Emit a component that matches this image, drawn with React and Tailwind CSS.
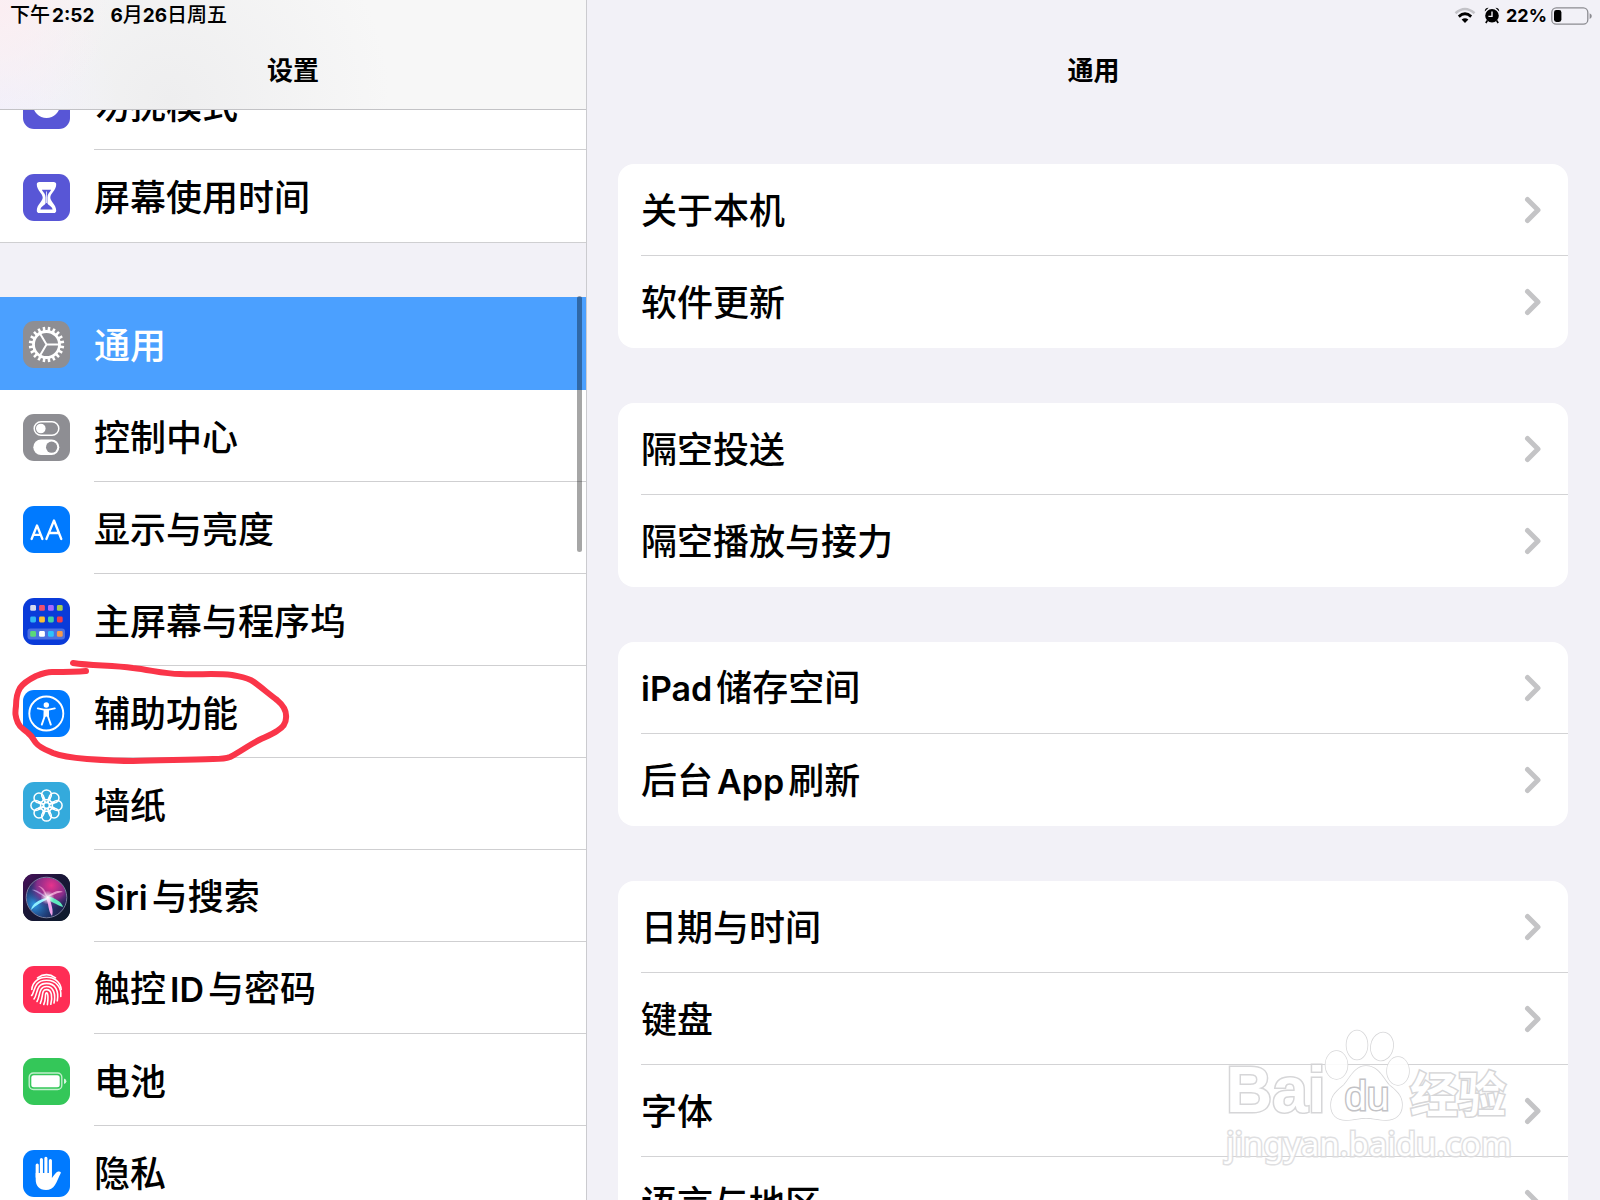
const FONT = "font-['Inter','Noto_Sans_CJK_SC',sans-serif]";

function Gear() {
  const teeth = Array.from({ length: 20 }, (_, i) => i * 18);
  return (
    <g stroke="#fff" fill="none">
      <circle cx="23.5" cy="23.5" r="13" strokeWidth="2.8" />
      {teeth.map((a) => (
        <path key={a} d="M23.5 10.5V5.8" strokeWidth="2.5" transform={`rotate(${a + 9} 23.5 23.5)`} />
      ))}
      <path d="M23.5 23.5H36M23.5 23.5L17 12.5M23.5 23.5L17 34.5" strokeWidth="2" />
    </g>
  );
}

function Switches() {
  return (
    <g>
      <rect x="11.2" y="7.7" width="24.6" height="13.6" rx="6.8" fill="none" stroke="#fff" strokeWidth="1.5" />
      <circle cx="17.8" cy="14.5" r="4.8" fill="#fff" />
      <rect x="10.3" y="25.5" width="26" height="15.5" rx="7.7" fill="#fff" />
      <circle cx="28.6" cy="33.2" r="5.6" fill="#8e8e93" />
    </g>
  );
}

function LetterSizes() {
  return (
    <g fill="none" stroke="#fff" strokeLinecap="round" strokeLinejoin="round" strokeWidth="2.3">
      <path d="M8.6 33L14 19.5L19.4 33M10.4 28.8H17.6" />
      <path d="M23.4 33L31 14.5L38.3 33M26 27H36" />
    </g>
  );
}

const DOTS = [
  ['#d5d9ee', '#f0506e', '#a66bff', '#a5d04e'],
  ['#2fb4f5', '#fcc032', '#3fd0a5', '#f23b4a'],
  ['#5bd778', '#ffffff', '#2cc3fb', '#f79a4b'],
];

function HomeScreen() {
  return (
    <g>
      <rect x="4.5" y="30.5" width="37.5" height="11" rx="3" fill="#4b70e0" />
      {DOTS.map((row, r) =>
        row.map((c, i) => (
          <rect key={c} x={7.2 + i * 8.9} y={[7, 18.6, 33][r]} width="5.8" height="5.8" rx="1.4" fill={c} />
        ))
      )}
    </g>
  );
}

function Person() {
  return (
    <g>
      <circle cx="23.3" cy="23.5" r="17" fill="none" stroke="#fff" strokeWidth="1.9" />
      <circle cx="23.3" cy="15" r="2.7" fill="#fff" />
      <path
        d="M14.8 18.4L20.8 19.6Q23.3 20 25.8 19.6L31.8 18.4M21.6 20.5V26.5L18.8 34.6M25 20.5V26.5L27.8 34.6"
        fill="none"
        stroke="#fff"
        strokeWidth="1.9"
        strokeLinecap="round"
        strokeLinejoin="round"
      />
      <path d="M21 19.6H25.6L26 27.5L23.3 26.6L20.6 27.5Z" fill="#fff" />
    </g>
  );
}

function Flower() {
  const petals = [0, 45, 90, 135, 180, 225, 270, 315];
  return (
    <g fill="none" stroke="#fff" strokeWidth="1.5">
      {petals.map((a) => (
        <circle key={a} cx="23.5" cy="12.8" r="4.9" transform={`rotate(${a} 23.5 23.5)`} />
      ))}
      {petals.map((a) => (
        <path key={a} d="M19.5 15.6Q20.6 19.6 23.5 20.6Q26.400 19.6 27.5 15.6" strokeWidth="1.3" transform={`rotate(${a} 23.5 23.5)`} />
      ))}
      <circle cx="23.5" cy="23.5" r="2.9" />
    </g>
  );
}

function Siri() {
  return (
    <g>
      <defs>
        <linearGradient id="siriBg" x1="0" y1="0" x2="1" y2="1">
          <stop offset="0" stopColor="#4a0f5c" />
          <stop offset="0.4" stopColor="#1b1638" />
          <stop offset="1" stopColor="#0c1c2c" />
        </linearGradient>
        <radialGradient id="siriPink" cx="0.62" cy="0.2" r="0.6">
          <stop offset="0" stopColor="#e8338c" />
          <stop offset="0.6" stopColor="#a02f96" stopOpacity="0.8" />
          <stop offset="1" stopColor="#3b2a80" stopOpacity="0" />
        </radialGradient>
        <radialGradient id="siriBlue" cx="0.2" cy="0.68" r="0.6">
          <stop offset="0" stopColor="#2e9be6" />
          <stop offset="1" stopColor="#1b4c9c" stopOpacity="0" />
        </radialGradient>
        <radialGradient id="siriGlow" cx="0.5" cy="0.5" r="0.5">
          <stop offset="0" stopColor="#fff" />
          <stop offset="1" stopColor="#fff" stopOpacity="0" />
        </radialGradient>
      </defs>
      <rect width="47" height="47" fill="url(#siriBg)" />
      <circle cx="23.5" cy="23.5" r="20" fill="#1f2553" />
      <circle cx="23.5" cy="23.5" r="20" fill="url(#siriBlue)" />
      <circle cx="23.5" cy="23.5" r="20" fill="url(#siriPink)" />
      <path d="M24 24C17 17 11 15 9 16C13 17 19 22 24 24Z" fill="#c4b5f3" opacity="0.7" />
      <path d="M24 23C23 17 20 12 15 12C19 14 21 19 24 23Z" fill="#f7a1d2" opacity="0.7" />
      <path d="M24 23C30 17 37 16 40 18C35 18 29 22 24 23Z" fill="#f6b3dd" opacity="0.8" />
      <path d="M24 24C16 25 9 30 8 36C13 31 19 28 25 25Z" fill="#8df0ff" />
      <path d="M24 22C32 24 39 28 40 33C34 31 27 27 24 25Z" fill="#5ee8bd" />
      <path d="M23 24C26 30 25 37 29 42C31 37 28 29 26 23Z" fill="#f2a5ec" />
      <circle cx="24.5" cy="23.5" r="7" fill="url(#siriGlow)" />
      <circle cx="23.5" cy="23.5" r="20.3" fill="none" stroke="#8f96b5" strokeWidth="1" opacity="0.8" />
    </g>
  );
}

function Fingerprint() {
  return (
    <g fill="none" stroke="#fff" strokeWidth="1.6" strokeLinecap="round">
      <path d="M14.5 11.8Q23.5 5.5 32.5 11.8" />
      <path d="M8.8 23.5C9.5 15.5 16 11.2 23.5 11.2S37.5 15.5 38.2 23.5" />
      <path d="M8.6 29.5C11.8 27 10 14.3 23.5 14.3C34 14.3 38.6 22 37.8 30.5" />
      <path d="M11 33C14.8 28.5 12.5 17.4 23.5 17.4C32.5 17.4 36 25 34.3 34.8" />
      <path d="M14 35.5C17.5 30 15.3 20.5 23.5 20.5C30.5 20.5 33 28 31 37" />
      <path d="M17.3 37.3C20.5 31 18 23.6 23.5 23.6C29 23.6 29.5 31 27.8 38.2" />
      <path d="M20.8 38.4C23 33 22 30 22.8 27.5Q23.5 26 24.4 27.5C25.6 30 25 34 24.4 38.6" />
    </g>
  );
}

function BatteryFull() {
  return (
    <g>
      <rect x="6.2" y="15" width="32.6" height="16.5" rx="4.2" fill="none" stroke="#fff" strokeWidth="1.4" opacity="0.7" />
      <rect x="8.3" y="17.2" width="28.4" height="12.1" rx="2.5" fill="#fff" />
      <path d="M41 20.5Q43.4 21.3 43.4 23.3T41 26Z" fill="#fff" opacity="0.8" />
    </g>
  );
}

function Hand() {
  return (
    <g fill="none" stroke="#fff" strokeLinecap="round">
      <path d="M14.2 15V27M18.4 9.5V25M22.9 8.2V25M27.4 10.5V25" strokeWidth="3.1" />
      <path
        d="M12.7 23H28.9V28C31 25.5 32.5 22.6 35 21.6C36.7 21 38.4 21.8 37.7 23.3C35.6 27 34.3 31.5 32 35C29.8 38.3 27 40 23 40C16 40 12.7 35.5 12.7 29.5Z"
        fill="#fff"
        stroke="none"
      />
    </g>
  );
}

function Hourglass() {
  return (
    <g>
      <path
        d="M16.5 8H30.5Q33.4 8 33.2 10.8C33 16.5 27.3 19.5 27.3 23.5S33 30.5 33.2 36.2Q33.4 39 30.5 39H16.5Q13.6 39 13.8 36.2C14 30.5 19.7 27.5 19.7 23.5S14 16.5 13.8 10.8Q13.6 8 16.5 8Z"
        fill="#fff"
      />
      <path d="M18.8 15.8H28.2C26.6 18.6 24.4 20 24.4 23.5V29C24.6 31 29 32.2 29.6 35.5H17.4C18 32.2 22.4 31 22.6 29V23.5C22.6 20 20.4 18.6 18.8 15.8Z" fill="#5856d6" />
      <path d="M23.5 17.5V29" stroke="#fff" strokeWidth="0.8" />
    </g>
  );
}

function Moon() {
  return <circle cx="23.5" cy="22.5" r="13.5" fill="#fff" />;
}

const TOP_ITEMS = [
  { label: '勿扰模式', bg: 'bg-[#5856d6]', Icon: Moon },
  { label: '屏幕使用时间', bg: 'bg-[#5856d6]', Icon: Hourglass },
];

const ITEMS = [
  { label: '通用', bg: 'bg-[#8e8e93]', Icon: Gear, selected: true },
  { label: '控制中心', bg: 'bg-[#8e8e93]', Icon: Switches },
  { label: '显示与亮度', bg: 'bg-[#007aff]', Icon: LetterSizes },
  { label: '主屏幕与程序坞', bg: 'bg-[#0a3bd9]', Icon: HomeScreen },
  { label: '辅助功能', bg: 'bg-[#007aff]', Icon: Person, marked: true },
  { label: '墙纸', bg: 'bg-[#34aadc]', Icon: Flower },
  { label: 'Siri与搜索', bg: 'bg-[#14152c]', Icon: Siri },
  { label: '触控ID与密码', bg: 'bg-[#ff2d55]', Icon: Fingerprint },
  { label: '电池', bg: 'bg-[#34c759]', Icon: BatteryFull },
  { label: '隐私', bg: 'bg-[#007aff]', Icon: Hand },
];

const GROUPS = [
  ['关于本机', '软件更新'],
  ['隔空投送', '隔空播放与接力'],
  ['iPad储存空间', '后台App刷新'],
  ['日期与时间', '键盘', '字体', '语言与地区'],
];

// Latin runs are set a little smaller and heavier than the Chinese around them
function Label({ text }) {
  return (
    <span className="block pt-0.5 text-[36px] leading-[48px] font-medium whitespace-nowrap">
      {text.split(/([A-Za-z]+)/).filter(Boolean).map((part, i) =>
        /[A-Za-z]/.test(part) ? (
          <span key={part} className={i === 0 ? 'mr-1 text-[34px] font-semibold' : 'mx-1 text-[34px] font-semibold'}>
            {part}
          </span>
        ) : (
          part
        )
      )}
    </span>
  );
}

function Mark() {
  return (
    <svg className="pointer-events-none absolute -top-2 left-0 z-10" width="300" height="120" viewBox="0 656 300 120" fill="none">
      <path
        d="M73 661C92 664 112 663 133 666C151 668 164 672 180 672C198 673 215 671 232 673C241 675 247 675 254 680C262 686 269 692 277 698C283 703 287 708 286 716C286 722 282 726 277 729C271 733 265 735 259 738C249 743 240 750 230 755C225 757 219 757 213 757C186 758 160 758 133 759C117 759 102 758 87 757C75 756 63 755 53 751C46 748 40 746 36 741C33 737 32 734 28 731C24 727 20 726 18 721C15 714 15 711 16 704C16 697 17 691 20 686C24 680 30 677 36 674C41 672 46 670 52 670C63 670 75 670 86 669"
        stroke="#fa3549"
        strokeWidth="6"
        strokeLinecap="round"
        strokeLinejoin="round"
      />
    </svg>
  );
}

function SidebarRow({ item, last }) {
  const { label, bg, Icon, selected, marked } = item;
  return (
    <li className="relative">
      <a
        href="#"
        aria-current={selected ? 'page' : undefined}
        className={selected ? 'flex h-[93px] items-center gap-6 bg-[#4ba0ff] pt-0.5 pl-[23px] text-white' : 'flex h-[92px] items-center gap-6 pt-0.5 pl-[23px]'}
      >
        <span className={`size-[47px] shrink-0 overflow-hidden rounded-[11px] ${bg}`}>
          <svg viewBox="0 0 47 47" className="size-full" aria-hidden="true">
            <Icon />
          </svg>
        </span>
        <span className={selected || last ? 'flex h-full flex-1 items-center' : 'flex h-full flex-1 items-center border-b border-[#cfcfd1]'}>
          <Label text={label} />
        </span>
      </a>
      {marked && <Mark />}
    </li>
  );
}

function StatusIcons() {
  return (
    <div className="flex h-[31px] items-center justify-end pr-2 text-[18px] font-bold">
      <svg width="22" height="17" viewBox="0 0 22 17" fill="none" className="mr-2" aria-label="Wi-Fi">
        <path d="M1.5 6.2Q11 -2.2 20.5 6.2" stroke="#c3c3c8" strokeWidth="2.6" />
        <path d="M4.8 9.6Q11 4 17.2 9.6" stroke="#000" strokeWidth="2.8" />
        <path d="M11 16L7.6 12.5Q11 9.8 14.4 12.5Z" fill="#000" />
      </svg>
      <svg width="16" height="17" viewBox="0 0 16 17" className="mr-1.5" aria-label="闹钟">
        <circle cx="8" cy="8.8" r="6.8" />
        <path d="M0.8 4.6Q0.6 1 4.6 0.8ZM15.2 4.6Q15.4 1 11.4 0.8Z" />
        <path d="M3.4 13.5L1.8 16M12.6 13.5L14.2 16" stroke="#000" strokeWidth="1.6" />
        <path d="M8 4.6V9.4H4.4" fill="none" stroke="#f2f1f7" strokeWidth="1.4" />
      </svg>
      <span>22%</span>
      <svg width="41" height="18" viewBox="0 0 41 18" className="ml-1" aria-label="电量">
        <rect x="0.8" y="0.8" width="36" height="16.4" rx="4.5" fill="none" stroke="#8c8c91" strokeWidth="1.3" />
        <rect x="3" y="3" width="7.4" height="12" rx="2.4" />
        <path d="M38.6 6.2Q40.8 7.2 40.8 9T38.6 12Z" fill="#8c8c91" />
      </svg>
    </div>
  );
}

function Watermark() {
  return (
    <div className="pointer-events-none absolute right-[88px] bottom-[34px] w-[286px] text-white opacity-90">
      <div className="flex h-[94px] items-end [-webkit-text-stroke:3px_#d2d2d4] [paint-order:stroke_fill]">
        <span className="w-[98px] font-['Liberation_Sans',sans-serif] text-[64px] leading-[64px] font-bold">Bai</span>
        <span className="relative h-[94px] w-[86px] shrink-0">
          <svg width="86" height="94" viewBox="0 0 86 94" fill="#fff" stroke="#d2d2d4" strokeWidth="1.5">
            <ellipse cx="12.5" cy="37" rx="11" ry="14" />
            <ellipse cx="33" cy="17" rx="10.5" ry="14.5" />
            <ellipse cx="58" cy="18.5" rx="11" ry="14" transform="rotate(12 58 18.5)" />
            <ellipse cx="74" cy="43" rx="11" ry="14" />
            <path d="M42 38C54 38 59 50 65 57C71 62 78 67 78 77C78 87 71 92 62 92C54 92 50 90 42 90C34 90 30 92 22 92C13 92 7 87 7 77C7 67 14 62 20 57C26 50 31 38 42 38Z" />
          </svg>
          <span className="absolute inset-x-0 bottom-1.5 text-center font-['Liberation_Sans',sans-serif] text-[40px] leading-[40px] [-webkit-text-stroke:3px_#bcbcc0]">
            du
          </span>
        </span>
        <span className="text-[48px] leading-[54px] font-bold">经验</span>
      </div>
      <div className="text-center font-['Noto_Sans',sans-serif] text-[33px] leading-[44px] [-webkit-text-stroke:3px_#dcdcde] [paint-order:stroke_fill]">
        jingyan.baidu.com
      </div>
    </div>
  );
}

export default function App() {
  return (
    <div lang="zh-CN" className={`relative flex h-screen overflow-hidden bg-[#f2f1f7] text-black ${FONT}`}>
      <aside className="relative flex w-[587px] shrink-0 flex-col border-r border-[#cbcbcf]">
        <header className="z-10 h-[110px] shrink-0 border-b border-[#c3c3c6] bg-[#f7f7f7] bg-[radial-gradient(circle_at_0_10px,#fbeef2,transparent_110px),radial-gradient(circle_at_0_110px,#f1f0fb,transparent_120px),radial-gradient(circle_at_170px_100px,#eeeeef,transparent_220px)]">
          <div className="flex h-[31px] items-center gap-4 pl-2.5 text-[20px] leading-[24px] font-medium">
            <span>
              下午<span className="ml-0.5 text-[19px] font-bold">2:52</span>
            </span>
            <span>
              <span className="text-[19px] font-bold">6</span>月<span className="text-[19px] font-bold">26</span>日周五
            </span>
          </div>
          <h1 className="pt-5 text-center text-[26px] leading-[40px] font-bold">设置</h1>
        </header>
        <nav className="min-h-0 flex-1 overflow-hidden">
          <ul className="-mt-[52px] border-b border-[#cfcfd1] bg-white">
            {TOP_ITEMS.map((item, i) => (
              <SidebarRow key={item.label} item={item} last={i === 1} />
            ))}
          </ul>
          <ul className="mt-[54px] bg-white">
            {ITEMS.map((item) => (
              <SidebarRow key={item.label} item={item} />
            ))}
          </ul>
        </nav>
        <div className="absolute top-[296px] right-1 h-64 w-[5px] rounded-full bg-black/35" />
      </aside>

      <main className="min-w-0 flex-1">
        <StatusIcons />
        <h2 className="pt-5 text-center text-[26px] leading-[40px] font-bold">通用</h2>
        <div className="flex flex-col gap-[55px] pt-[73px] pr-8 pl-[31px]">
          {GROUPS.map((group) => (
            <ul key={group[0]} className="rounded-2xl bg-white pl-[23px]">
              {group.map((label, i) => (
                <li key={label} className={i < group.length - 1 ? 'h-[92px] border-b border-[#d3d3d5]' : 'h-[92px]'}>
                  <a href="#" className="flex h-full items-center justify-between pr-[26px]">
                    <Label text={label} />
                    <svg width="18" height="28" viewBox="0 0 18 28" fill="none" aria-hidden="true">
                      <path d="M3.5 3.5L14 14L3.5 24.5" stroke="#c4c4c6" strokeWidth="5" strokeLinecap="round" strokeLinejoin="round" />
                    </svg>
                  </a>
                </li>
              ))}
            </ul>
          ))}
        </div>
      </main>
      <Watermark />
    </div>
  );
}
